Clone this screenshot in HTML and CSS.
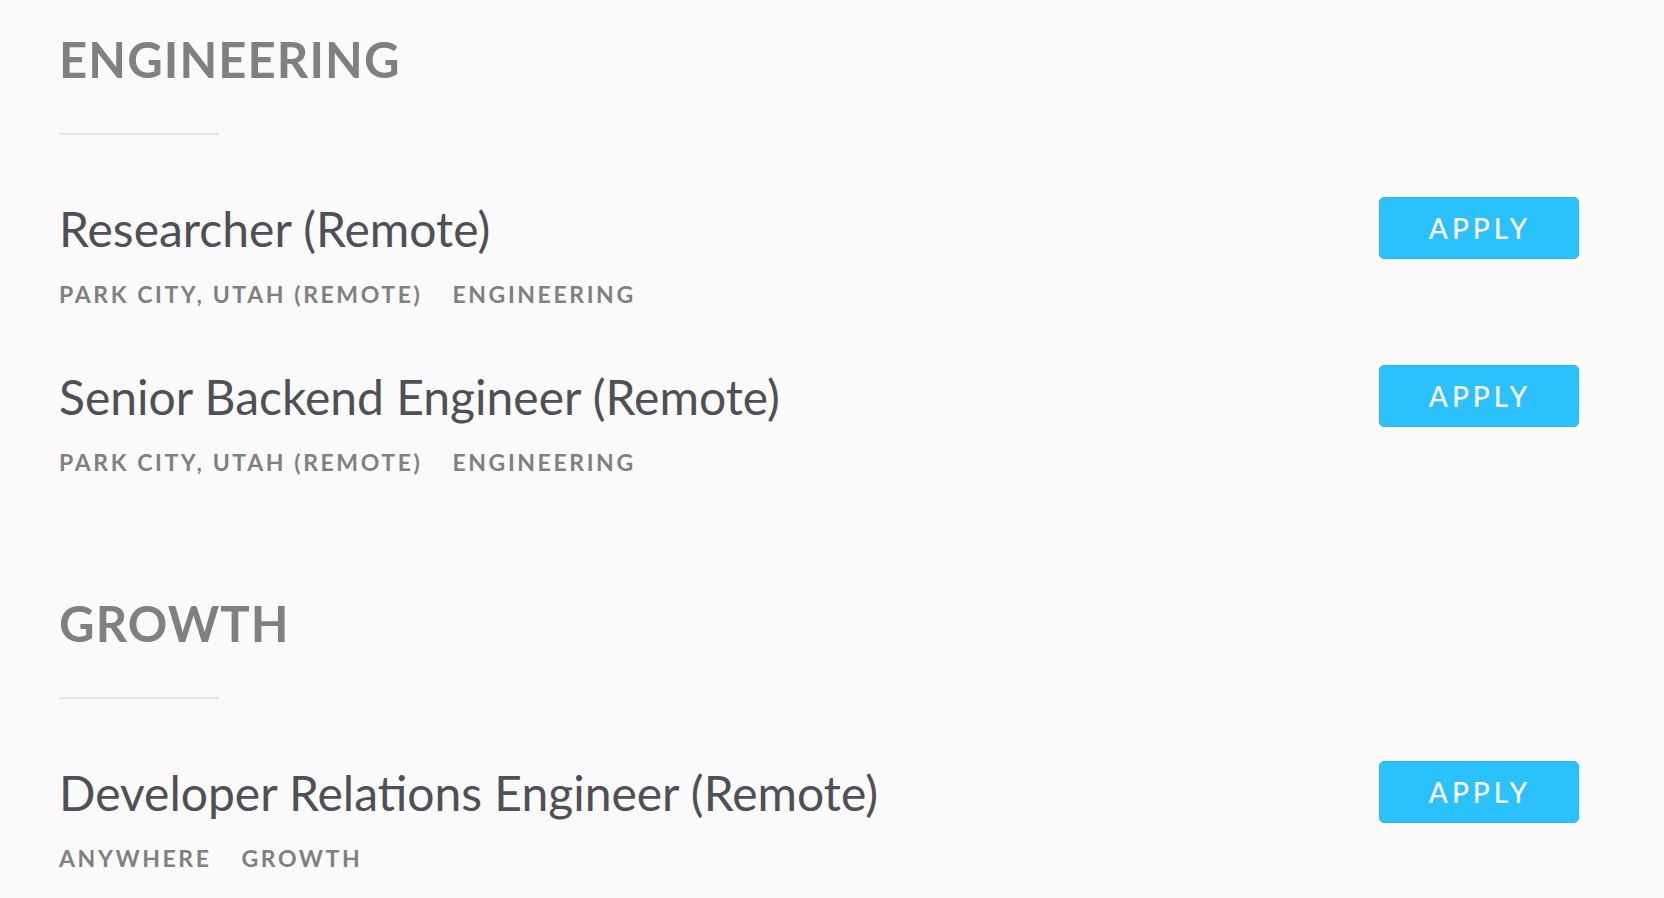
FILE: index.html
```html
<!DOCTYPE html>
<html lang="en">
<head>
<meta charset="utf-8">
<title>Careers</title>
<link rel="stylesheet" href="styles.css">
</head>
<body>
<main class="page">
  <section class="dept">
    <h2 class="dept-title">ENGINEERING</h2>
    <div class="divider"></div>
    <ul class="jobs">
      <li class="job">
        <div class="job-info">
          <h3 class="job-title">Researcher (Remote)</h3>
          <div class="job-meta"><span class="meta-item">Park City, Utah (Remote)</span><span class="meta-item">Engineering</span></div>
        </div>
        <a class="apply" href="#">Apply</a>
      </li>
      <li class="job">
        <div class="job-info">
          <h3 class="job-title">Senior Backend Engineer (Remote)</h3>
          <div class="job-meta"><span class="meta-item">Park City, Utah (Remote)</span><span class="meta-item">Engineering</span></div>
        </div>
        <a class="apply" href="#">Apply</a>
      </li>
    </ul>
  </section>
  <section class="dept">
    <h2 class="dept-title">GROWTH</h2>
    <div class="divider"></div>
    <ul class="jobs">
      <li class="job">
        <div class="job-info">
          <h3 class="job-title">Developer Relations Engineer (Remote)</h3>
          <div class="job-meta"><span class="meta-item">Anywhere</span><span class="meta-item">Growth</span></div>
        </div>
        <a class="apply" href="#">Apply</a>
      </li>
    </ul>
  </section>
</main>
</body>
</html>
```
FILE: styles.css
```css
html, body {
  margin: 0;
  padding: 0;
  background: #fafafa;
}

body {
  font-family: Lato, "Open Sans", "Liberation Sans", sans-serif;
  -webkit-font-smoothing: antialiased;
}

.page {
  padding: 29px 85px 0 59px;
  display: flex;
  flex-direction: column;
  gap: 116px;
}

.dept-title {
  margin: 0;
  font-size: 49px;
  line-height: 60px;
  font-weight: 700;
  color: #808080;
  letter-spacing: 1.1px;
}

.divider {
  margin-top: 44px;
  width: 160px;
  height: 2px;
  background: #e5e5e5;
}

.jobs {
  list-style: none;
  margin: 62px 0 0;
  padding: 0;
  display: flex;
  flex-direction: column;
  gap: 56px;
}

.job {
  display: flex;
  justify-content: space-between;
  align-items: flex-start;
}

.job-title {
  margin: 0;
  font-size: 48px;
  line-height: 64px;
  font-weight: 400;
  color: #4e5055;
}

.job-meta {
  margin-top: 18px;
  display: flex;
  gap: 30px;
  line-height: 30px;
}

.meta-item {
  font-size: 23px;
  font-weight: 700;
  text-transform: uppercase;
  letter-spacing: 2.6px;
  color: #808080;
}

.apply {
  display: flex;
  align-items: center;
  justify-content: center;
  box-sizing: border-box;
  width: 200px;
  height: 62px;
  border-radius: 5px;
  background: #2ac1fc;
  border: 1px solid #27b8f2;
  color: #ffffff;
  text-decoration: none;
  text-transform: uppercase;
  font-size: 28px;
  font-weight: 500;
  letter-spacing: 4px;
  padding-left: 2px;
}
```
